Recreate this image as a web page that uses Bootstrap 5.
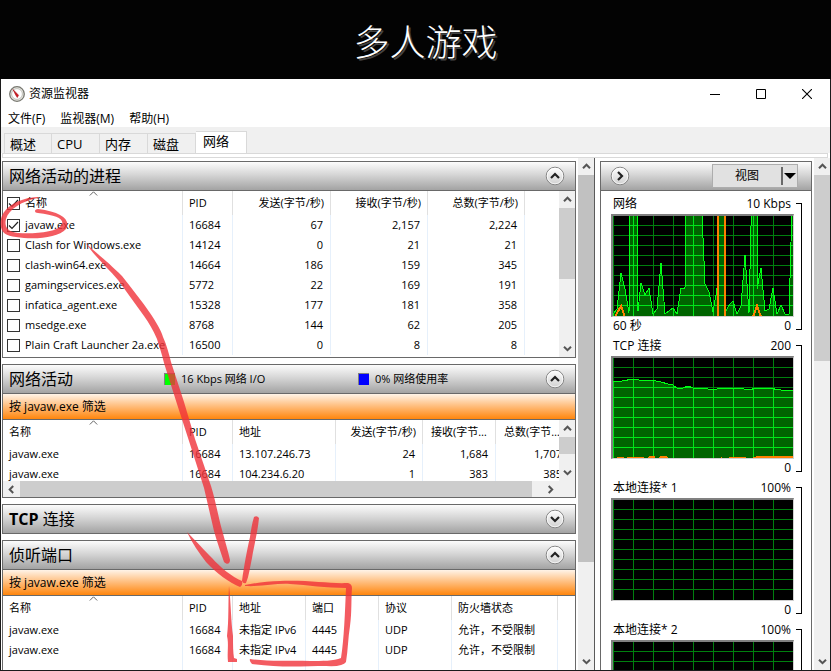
<!DOCTYPE html>
<html lang="zh-CN">
<head>
<meta charset="utf-8">
<meta name="viewport" content="width=device-width, initial-scale=1">
<title>资源监视器</title>
<link href="https://cdn.jsdelivr.net/npm/bootstrap@5.3.0/dist/css/bootstrap.min.css" rel="stylesheet">
<style>
body{font:11px/20px "Open Sans","Noto Sans CJK SC",sans-serif;color:#000;background:#030303;height:100vh}
button{font:inherit;color:inherit;border:0;background:none;padding:0}
.hero{height:79px;padding:4px 0 0 20px;color:#fff;font:300 36px/72px "Noto Sans CJK SC",sans-serif;text-shadow:2px 2px 0 #444}
.hero h1{font:inherit}
.win{border:1px solid #1c1c1c;border-top:0}
.titlebar{height:29px;font-size:12px;padding-left:8px}
.titlebar button{width:46px;height:29px}
.menubar{height:19px;padding-left:7px;gap:15px;font-size:12px;line-height:22px}
.menubar a{color:#000}
.tabstrip{height:26px;background:#f0f0f0;padding-left:3px;font-size:13px}
.tabstrip button{width:48px;height:20px;line-height:18px;padding-left:5px;text-align:left;border:1px solid #d9d9d9;border-width:1px 1px 0 0}
.tabstrip button:first-child{border-left-width:1px}
.tabstrip .on{width:51px;height:22px;background:#fff;padding:0 0 4px 7px}
.tabline{height:5px;margin:0 2px 0 1px;border:1px solid #d9d9d9}
.leftcol{padding:3px 2px 0 1px;gap:6px}
.divider{width:1px;background:#5a5a5a}
.rightcol{width:235px;padding-left:5px;gap:2px}
.rightcol .pane{margin-top:3px}
.pane{border:1px solid #696969;background:#fff}
.pane-head{height:28px;background:linear-gradient(#fcfcfc,#d6d6d6 45%,#a3a3a3);padding:0 10px 0 6px}
.rightcol .pane-head{padding:0 13px 0 9px}
.pane-head h2{font-size:16px;line-height:28px;margin:0;font-weight:400}
.pane-body{border-top:1px solid #696969}
.w-legend{width:194px}
.w-head{width:155px}
.legend-item{gap:6px}
.sq{width:11px;height:12px;border:1px solid #808080;border-width:1px 0 0 1px}
.sq-g{background:#0f0}.sq-b{background:#00f}
.filterbar{height:26px;border-bottom:1px solid #696969;background:linear-gradient(#fff4e8,#ffc184 45%,#ff860d);padding-left:6px;font-size:12px;line-height:26px}
.grid-t{table-layout:fixed;width:100%;border-collapse:separate;border-spacing:0}
.grid-t th,.grid-t td{font-weight:400;height:20px;line-height:20px;padding:0 6px;border-right:1px solid #e6f0fb;white-space:nowrap;overflow:hidden}
.grid-t th{height:24px;line-height:24px;border-right-color:#e0e0e0;text-overflow:ellipsis}
.grid-t .r{text-align:right}
.grid-t td.r{padding-right:7px}
.grid-t tr>:last-child{border-right:0}
.grid-t .ck{padding-left:4px}
.ck label{display:flex;align-items:center;gap:5px}
.grid-t tr>:first-child{position:relative}
.sort{position:absolute;left:86px;top:0}
.tick{appearance:none;width:13px;height:13px;border:1px solid #333;background:#fff;margin:0;flex:none}
.tick:checked{background:#fff url("data:image/svg+xml,%3Csvg xmlns='http://www.w3.org/2000/svg' viewBox='0 0 11 11'%3E%3Cpath d='M1 5.5l3 3 6-6.5' fill='none' stroke='%23222' stroke-width='1.2'/%3E%3C/svg%3E")}
.c1{width:180px}.c2{width:50px}.c3{width:98px}.c4{width:97px}.c5{width:103px}.c6{width:87px}.c7{width:73px}.c8{width:106px}
.h-proc{height:167px}.h-act{height:61px}
.vs{width:16px;background:#f0f0f0;flex:none}
.vs button,.hs button{width:16px;height:17px;display:flex;align-items:center;justify-content:center;flex:none}
.hs{height:16px;background:#f0f0f0;padding-right:16px}
.hs button{width:17px;height:16px}
.knob{background:#cdcdcd}
.knob-d{background:#c1c1c1}
.round{width:20px;height:20px;flex:none}
.round svg{display:block}
.viewbtn{width:86px;height:24px;background:#e1e1e1;border:1px solid #adadad;font-size:12px}
.viewbtn i{width:2px;height:18px;background:#696969}
.graphs{padding:4px 9px 0 10px;font-size:12px}
.meter{height:142px}
.meter .cap{line-height:18px;height:19px;padding:0 3px 0 2px}
.plot{height:103px;border:1px solid #b0b0b0;border-width:2px 1px 1px 2px;border-color:#808080 #d0d0d0 #d0d0d0 #808080;background:#000}
.plot svg{display:block;width:100%;height:100px}
.dim{fill:#007f0e}
.lit{fill:#00e61a}
.brk{width:6px;margin:8px 0 7px 2px;border:1px solid #000;border-left:0}
.ink{position:absolute;left:0;top:0;pointer-events:none}
</style>
<script src="https://cdn.jsdelivr.net/npm/bootstrap@5.3.0/dist/js/bootstrap.bundle.min.js"></script>
</head>
<body class="d-flex flex-column overflow-hidden position-relative">
<svg width="0" height="0" class="position-absolute">
<defs>
<symbol id="up" viewBox="0 0 9 7"><path d="M1 5.2L4.500 1.700 8 5.200" fill="none" stroke="#555" stroke-width="2"/></symbol>
<symbol id="dn" viewBox="0 0 9 7"><path d="M1 1.700L4.500 5.200 8 1.700" fill="none" stroke="#555" stroke-width="2"/></symbol>
<symbol id="lf" viewBox="0 0 7 9"><path d="M5.200 1L1.700 4.500 5.200 8" fill="none" stroke="#555" stroke-width="2"/></symbol>
<symbol id="rt" viewBox="0 0 7 9"><path d="M1.700 1L5.200 4.500 1.700 8" fill="none" stroke="#555" stroke-width="2"/></symbol>
<symbol id="srt" viewBox="0 0 9 5"><path d="M.8 4.500L4.500 .8 8.200 4.500" fill="none" stroke="#666"/></symbol>
<linearGradient id="rg" x2="0" y2="1"><stop stop-color="#fff"/><stop offset="1" stop-color="#d0d0d0"/></linearGradient>
<symbol id="disc" viewBox="0 0 20 20"><circle cx="10" cy="10" r="8.800" fill="url(#rg)" stroke="#858585"/><circle cx="10" cy="10" r="7.800" fill="none" stroke="#fff" stroke-opacity=".7"/></symbol>
<path id="mesh" d="M0 0h1v100H0zM20 0h1v100h-1zM40 0h1v100h-1zM60 0h1v100h-1zM80 0h1v100h-1zM100 0h1v100h-1zM120 0h1v100h-1zM140 0h1v100h-1zM160 0h1v100h-1zM0 9h180v1H0zM0 19h180v1H0zM0 29h180v1H0zM0 39h180v1H0zM0 49h180v1H0zM0 59h180v1H0zM0 69h180v1H0zM0 79h180v1H0zM0 89h180v1H0z"/>
<path id="net" d="M0 100V98L4 93 8 57 12 73 16 97 17-2H24L25 95 28 67 32 79 36 72 40 98 44 93 48 47 52 98 60 92 64 98 68 72H72L73-2H89L92 68 96 76 100 96 104 73 105-2H112L113 95 116 89 120 85 124 98 128 90 132 39 136 97 138 10 139-2H144V73L148 52 152 95 156 93 160 72 164 98 168 89 172 98H176L178 26 179-2H182V102H0z"/>
<path id="tcp" d="M-1 102V23H9L20 21 26 22H38L48 24 55 26 60 27 64 30H70L75 28 80 30H90L100 32 108 30H125L137 32 142 30H155L168 32H182V102z"/>
<clipPath id="netclip"><use href="#net"/></clipPath>
<clipPath id="tcpclip"><use href="#tcp"/></clipPath>
</defs>
</svg>

<header class="hero text-center flex-shrink-0"><h1 class="m-0">多人游戏</h1></header>

<main class="win bg-white d-flex flex-column flex-fill overflow-hidden">
<div class="titlebar d-flex align-items-center flex-shrink-0">
<svg width="16" height="16" viewBox="0 0 16 16"><circle cx="8" cy="8" r="7.300" fill="#e9e9e4" stroke="#77776f" stroke-width="1.300"/><circle cx="8" cy="8" r="5.400" fill="#fff" stroke="#b5b5ac" stroke-width=".8"/><path d="M4 3.500L9.500 9.200 8.300 11.500 6.700 9z" fill="#d01820" stroke="#a51218" stroke-width=".6"/></svg>
<span class="ms-1 me-auto">资源监视器</span>
<button aria-label="最小化"><svg width="10" height="10"><path d="M0 5h10v1H0z"/></svg></button>
<button aria-label="最大化"><svg width="10" height="10"><path d="M.5 .5h9v9h-9z" fill="none" stroke="#000"/></svg></button>
<button aria-label="关闭"><svg width="10" height="10"><path d="M0 0l10 10M10 0L0 10" stroke="#000" stroke-width="1.100"/></svg></button>
</div>
<nav class="menubar d-flex flex-shrink-0"><a href="#" class="text-decoration-none">文件(F)</a><a href="#" class="text-decoration-none">监视器(M)</a><a href="#" class="text-decoration-none">帮助(H)</a></nav>
<div class="tabstrip d-flex align-items-end flex-shrink-0"><button>概述</button><button>CPU</button><button>内存</button><button>磁盘</button><button class="on">网络</button></div>
<div class="tabline flex-shrink-0"></div>

<div class="d-flex flex-fill overflow-hidden">
<div class="leftcol d-flex flex-column flex-fill overflow-hidden">

<section class="pane flex-shrink-0">
<div class="pane-head d-flex align-items-center"><h2 class="me-auto">网络活动的进程</h2>
<button class="round" aria-label="折叠"><svg width="20" height="20"><use href="#disc"/><path d="M6 12l4-4 4 4" fill="none" stroke="#222" stroke-width="2.200"/></svg></button></div>
<div class="pane-body h-proc d-flex">
<div class="flex-fill overflow-hidden">
<table class="grid-t">
<colgroup><col class="c1"><col class="c2"><col class="c3"><col class="c4"><col class="c4"><col></colgroup>
<thead><tr><th class="ck"><svg class="sort" width="9" height="5"><use href="#srt"/></svg><label><input type="checkbox" class="tick" checked>名称</label></th><th>PID</th><th class="r">发送(字节/秒)</th><th class="r">接收(字节/秒)</th><th class="r">总数(字节/秒)</th><th></th></tr></thead>
<tbody>
<tr><td class="ck"><label><input type="checkbox" class="tick" checked>javaw.exe</label></td><td>16684</td><td class="r">67</td><td class="r">2,157</td><td class="r">2,224</td><td></td></tr>
<tr><td class="ck"><label><input type="checkbox" class="tick">Clash for Windows.exe</label></td><td>14124</td><td class="r">0</td><td class="r">21</td><td class="r">21</td><td></td></tr>
<tr><td class="ck"><label><input type="checkbox" class="tick">clash-win64.exe</label></td><td>14664</td><td class="r">186</td><td class="r">159</td><td class="r">345</td><td></td></tr>
<tr><td class="ck"><label><input type="checkbox" class="tick">gamingservices.exe</label></td><td>5772</td><td class="r">22</td><td class="r">169</td><td class="r">191</td><td></td></tr>
<tr><td class="ck"><label><input type="checkbox" class="tick">infatica_agent.exe</label></td><td>15328</td><td class="r">177</td><td class="r">181</td><td class="r">358</td><td></td></tr>
<tr><td class="ck"><label><input type="checkbox" class="tick">msedge.exe</label></td><td>8768</td><td class="r">144</td><td class="r">62</td><td class="r">205</td><td></td></tr>
<tr><td class="ck"><label><input type="checkbox" class="tick">Plain Craft Launcher 2a.exe</label></td><td>16500</td><td class="r">0</td><td class="r">8</td><td class="r">8</td><td></td></tr>
</tbody></table>
</div>
<div class="vs d-flex flex-column"><button aria-label="向上"><svg width="9" height="7"><use href="#up"/></svg></button><div class="flex-fill"><div class="knob" style="height:54%"></div></div><button aria-label="向下"><svg width="9" height="7"><use href="#dn"/></svg></button></div>
</div>
</section>

<section class="pane flex-shrink-0">
<div class="pane-head d-flex align-items-center"><h2 class="w-head">网络活动</h2>
<div class="w-legend legend-item d-flex align-items-center"><span class="sq sq-g"></span>16 Kbps 网络 I/O</div>
<div class="legend-item d-flex align-items-center me-auto"><span class="sq sq-b"></span>0% 网络使用率</div>
<button class="round" aria-label="折叠"><svg width="20" height="20"><use href="#disc"/><path d="M6 12l4-4 4 4" fill="none" stroke="#222" stroke-width="2.200"/></svg></button></div>
<div class="pane-body">
<div class="filterbar">按 javaw.exe 筛选</div>
<div class="h-act d-flex">
<div class="flex-fill overflow-hidden">
<table class="grid-t">
<colgroup><col class="c1"><col class="c2"><col class="c5"><col class="c6"><col class="c7"><col class="c7"></colgroup>
<thead><tr><th><svg class="sort" width="9" height="5"><use href="#srt"/></svg>名称</th><th>PID</th><th>地址</th><th class="r">发送(字节/秒)</th><th class="ps-2">接收(字节/秒)</th><th class="ps-2">总数(字节/秒)</th></tr></thead>
<tbody>
<tr><td>javaw.exe</td><td>16684</td><td>13.107.246.73</td><td class="r">24</td><td class="r">1,684</td><td class="r">1,707</td></tr>
<tr><td>javaw.exe</td><td>16684</td><td>104.234.6.20</td><td class="r">1</td><td class="r">383</td><td class="r">385</td></tr>
</tbody></table>
</div>
<div class="vs d-flex flex-column"><button aria-label="向上"><svg width="9" height="7"><use href="#up"/></svg></button><div class="flex-fill"><div class="knob" style="height:63%"></div></div><button aria-label="向下"><svg width="9" height="7"><use href="#dn"/></svg></button></div>
</div>
<div class="hs d-flex"><button aria-label="向左"><svg width="7" height="9"><use href="#lf"/></svg></button><div class="flex-fill"><div class="knob h-100" style="width:98%"></div></div><button aria-label="向右"><svg width="7" height="9"><use href="#rt"/></svg></button></div>
</div>
</section>

<section class="pane flex-shrink-0">
<div class="pane-head d-flex align-items-center"><h2 class="me-auto"><b>TCP</b> 连接</h2>
<button class="round" aria-label="展开"><svg width="20" height="20"><use href="#disc"/><path d="M6 8l4 4 4-4" fill="none" stroke="#222" stroke-width="2.200"/></svg></button></div>
</section>

<section class="pane flex-fill border-bottom-0">
<div class="pane-head d-flex align-items-center"><h2 class="me-auto">侦听端口</h2>
<button class="round" aria-label="折叠"><svg width="20" height="20"><use href="#disc"/><path d="M6 12l4-4 4 4" fill="none" stroke="#222" stroke-width="2.200"/></svg></button></div>
<div class="pane-body">
<div class="filterbar">按 javaw.exe 筛选</div>
<table class="grid-t">
<colgroup><col class="c1"><col class="c2"><col class="c7"><col class="c7"><col class="c7"><col class="c8"><col></colgroup>
<thead><tr><th><svg class="sort" width="9" height="5"><use href="#srt"/></svg>名称</th><th>PID</th><th>地址</th><th>端口</th><th>协议</th><th>防火墙状态</th><th></th></tr></thead>
<tbody>
<tr><td>javaw.exe</td><td>16684</td><td>未指定 IPv6</td><td>4445</td><td>UDP</td><td>允许，不受限制</td><td></td></tr>
<tr><td>javaw.exe</td><td>16684</td><td>未指定 IPv4</td><td>4445</td><td>UDP</td><td>允许，不受限制</td><td></td></tr>
<tr aria-hidden="true"><td></td><td></td><td></td><td></td><td></td><td></td><td></td></tr>
</tbody></table>
</div>
</section>
</div>

<div class="vs d-flex flex-column"><button aria-label="向上"><svg width="9" height="7"><use href="#up"/></svg></button><div class="flex-fill"><div class="knob-d" style="height:81%"></div></div><button aria-label="向下"><svg width="9" height="7"><use href="#dn"/></svg></button></div>
<div class="divider flex-shrink-0"></div>

<aside class="rightcol d-flex flex-shrink-0">
<section class="pane flex-fill border-bottom-0 overflow-hidden">
<div class="pane-head d-flex align-items-center justify-content-between">
<button class="round" aria-label="隐藏图表"><svg width="20" height="20"><use href="#disc"/><path d="M8 6l4 4-4 4" fill="none" stroke="#222" stroke-width="2.200"/></svg></button>
<button class="viewbtn d-flex align-items-center"><span class="flex-fill">视图</span><i></i><svg width="14" height="8"><path d="M1 1h12L7 7z"/></svg></button>
</div>
<div class="pane-body graphs">
<div class="meter d-flex"><div class="flex-fill">
<div class="cap d-flex justify-content-between"><span>网络</span><span>10 Kbps</span></div>
<div class="plot"><svg viewBox="0 0 180 100" preserveAspectRatio="none" shape-rendering="crispEdges"><use href="#mesh" class="dim"/><use href="#net" fill="#006400"/><g clip-path="url(#netclip)"><use href="#mesh" class="lit"/></g><use href="#net" fill="none" stroke="#00ff14"/>
<path fill="none" stroke="#ff8000" stroke-width="2" d="M2 101L4 97 8 90 12 101M105 0V100M112 0V100M140 101L144 90 148 101"/></svg></div>
<div class="cap d-flex justify-content-between"><span>60 秒</span><span>0</span></div>
</div><div class="brk"></div></div>

<div class="meter d-flex"><div class="flex-fill">
<div class="cap d-flex justify-content-between"><span>TCP 连接</span><span>200</span></div>
<div class="plot"><svg viewBox="0 0 180 100" preserveAspectRatio="none" shape-rendering="crispEdges"><use href="#mesh" class="dim"/><use href="#tcp" fill="#006400"/><g clip-path="url(#tcpclip)"><use href="#mesh" class="lit"/></g><use href="#tcp" fill="none" stroke="#00ff14"/>
<path fill="#ff8000" d="M4 99h7v1H4zM14 99h17v1H14zM35 99l2-1h5v2h-7zM46 99l2-1h5l2 2h-9zM108 99h1v1h-1zM116 99h17v1h-17zM140 99h3v-1h37v2h-40z"/></svg></div>
<div class="cap d-flex justify-content-end"><span>0</span></div>
</div><div class="brk"></div></div>

<div class="meter d-flex"><div class="flex-fill">
<div class="cap d-flex justify-content-between"><span>本地连接* 1</span><span>100%</span></div>
<div class="plot"><svg viewBox="0 0 180 100" preserveAspectRatio="none" shape-rendering="crispEdges"><use href="#mesh" class="dim"/></svg></div>
<div class="cap d-flex justify-content-end"><span>0</span></div>
</div><div class="brk"></div></div>

<div class="meter d-flex"><div class="flex-fill">
<div class="cap d-flex justify-content-between"><span>本地连接* 2</span><span>100%</span></div>
<div class="plot"><svg viewBox="0 0 180 100" preserveAspectRatio="none" shape-rendering="crispEdges"><use href="#mesh" class="dim"/></svg></div>
</div><div class="brk"></div></div>
</div>
</section>
<div class="vs d-flex flex-column"><button aria-label="向上"><svg width="9" height="7"><use href="#up"/></svg></button><div class="flex-fill"><div class="knob" style="height:39%"></div></div><button aria-label="向下"><svg width="9" height="7"><use href="#dn"/></svg></button></div>
</aside>
</div>
</main>

<svg class="ink" width="831" height="671" viewBox="0 0 831 671" fill="#f0323a" fill-opacity=".8">
<path d="M38 197C18 198 4 207 1 219C-1 232 5 236 16 237C34 240 58 238 66 229C71 220 62 212 38 209C34 209 34 213 38 213C56 215 64 219 62 224C58 233 32 234 18 233C8 232 4 227 6 219C9 209 22 201 38 198z"/>
<path d="M85 242C92 250 105 259 122 276C132 289 142 301 150 313C156 322 161 330 163 337C167 346 169 354 171 362L184 402L195 439L211 486C216 502 218 516 222 530C225 541 228 551 230 560C230 564 227 565 224 562C221 553 217 542 214 531L204 488L189 441L177 404L164 363C162 354 159 346 157 339C153 330 149 323 144 316L118 280C107 267 95 257 85 242z"/>
<path d="M187 532C197 542 204 550 212 558C220 567 232 577 242 581Q243 585 240 587C230 583 216 573 206 562C199 553 192 543 187 532z"/>
<path d="M254 517Q257 515 259 518C258 530 254 546 252 558C250 567 249 576 246 583Q243 584 242 581C244 566 247 550 250 537C251 530 252 523 254 517z"/>
<path d="M245 585C256 583 268 581 280 581C310 580 330 584 348 583Q352 584 352 588C351 600 352 612 350 626C348 638 348 650 346 662Q343 667 326 666C305 666 280 668 252 664Q249 661 250 659C270 662 290 660 310 661C322 661 334 661 341 658C344 640 345 612 346 588C326 588 308 585 290 584C276 583 262 587 245 586z"/>
<path d="M229 586C231 604 231 622 233 636C233 645 233 652 234 658L237 659V662H228C227 652 229 644 227 636C229 620 228 604 229 586z"/>
</svg>
</body>
</html>
